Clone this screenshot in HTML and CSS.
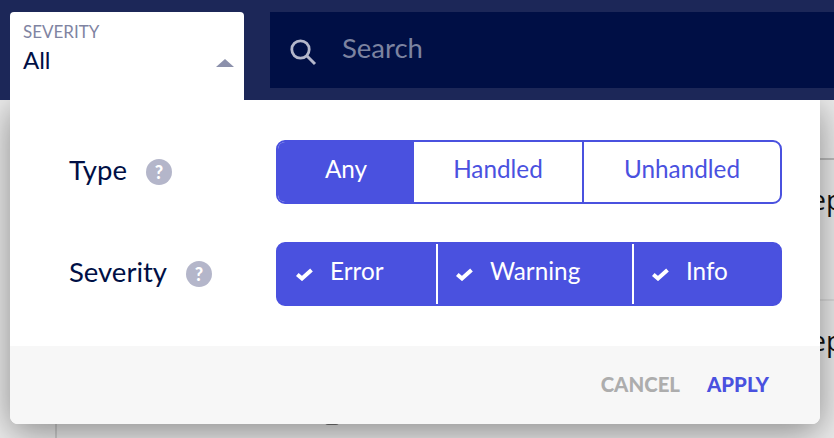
FILE: index.html
```html
<!DOCTYPE html>
<html lang="en">
<head>
<meta charset="utf-8">
<title>Severity filter</title>
<link rel="stylesheet" href="styles.css">
</head>
<body>
<div class="page">
  <header class="topbar">
    <button class="dropdown" type="button">
      <span class="dropdown-label">SEVERITY</span>
      <span class="dropdown-row">
        <span class="dropdown-value">All</span>
        <span class="caret"></span>
      </span>
    </button>
    <div class="search">
      <svg class="search-icon" viewBox="0 0 28 28" aria-hidden="true">
        <circle cx="11.5" cy="11.5" r="8.7" fill="none" stroke="#b4b7cb" stroke-width="2.8"/>
        <path d="M18 18l8 8" fill="none" stroke="#b4b7cb" stroke-width="3"/>
      </svg>
      <span class="search-text">Search</span>
    </div>
  </header>
  <main class="backdrop">
    <div class="back-row back-first"></div>
    <div class="back-row back-second"><span class="back-text">Step</span></div>
    <div class="back-row"><span class="back-text">Step</span></div>
    <span class="back-mark"></span>
  </main>
  <section class="popup">
    <div class="popup-body">
      <div class="field">
        <div class="field-label">Type<span class="help">?</span></div>
        <div class="segments">
          <span class="seg seg-any seg-on">Any</span>
          <span class="seg seg-handled">Handled</span>
          <span class="seg seg-unhandled">Unhandled</span>
        </div>
      </div>
      <div class="field">
        <div class="field-label">Severity<span class="help">?</span></div>
        <div class="segments segments-filled">
          <span class="chk chk-error"><svg class="tick" viewBox="0 0 17 13" aria-hidden="true"><path d="M1.3 6.5l4.7 4 9.5-8.5" fill="none" stroke="#fff" stroke-width="4"/></svg>Error</span>
          <span class="chk chk-warning"><svg class="tick" viewBox="0 0 17 13" aria-hidden="true"><path d="M1.3 6.5l4.7 4 9.5-8.5" fill="none" stroke="#fff" stroke-width="4"/></svg>Warning</span>
          <span class="chk chk-info"><svg class="tick" viewBox="0 0 17 13" aria-hidden="true"><path d="M1.3 6.5l4.7 4 9.5-8.5" fill="none" stroke="#fff" stroke-width="4"/></svg>Info</span>
        </div>
      </div>
    </div>
    <footer class="popup-footer">
      <span class="action action-cancel">CANCEL</span>
      <span class="action action-apply">APPLY</span>
    </footer>
  </section>
</div>
</body>
</html>
```
FILE: styles.css
```css
* { box-sizing: border-box; }
html, body { margin: 0; padding: 0; }
body { font-family: "Lato", "Open Sans", sans-serif; color: #000f45; }
.page { position: relative; width: 834px; height: 438px; overflow: hidden; background: #ececec; }

.topbar { position: relative; z-index: 2; height: 100px; background: #1c2758; padding: 12px 0 0 10px; display: flex; align-items: flex-start; gap: 26px; }
.dropdown { width: 234px; height: 88px; border: 0; background: #fff; border-radius: 4px 4px 0 0; padding: 11px 10px 0 13px; display: flex; flex-direction: column; text-align: left; font: inherit; color: inherit; }
.dropdown-label { font-size: 17px; line-height: 18px; font-weight: 400; color: #7f84a2; }
.dropdown-row { display: flex; justify-content: space-between; align-items: center; width: 100%; padding-top: 4px; }
.dropdown-value { font-size: 24px; line-height: 30px; }
.caret { width: 0; height: 0; border-left: 9px solid transparent; border-right: 9px solid transparent; border-bottom: 8px solid #8b90ab; margin-top: 5px; }
.search { flex: 1; height: 76px; background: #000f45; display: flex; align-items: center; padding-left: 20px; }
.search-icon { width: 28px; height: 28px; margin-top: 3px; margin-left: -1px; }
.search-text { margin-left: 25px; font-size: 27.5px; color: #7c83a0; margin-top: -6px; }

.backdrop { position: relative; margin-left: 55px; height: 338px; border-left: 2px solid #cfcfcf; }
.back-row { height: 141px; border-bottom: 2px solid #dcdcdc; padding: 20px 0 0 728px; white-space: nowrap; }
.back-first { height: 60px; border-bottom-color: #bcbcbc; }
.back-text { font-family: "Open Sans", sans-serif; font-size: 28px; color: #111; }
.back-mark { position: absolute; left: 268px; top: 322px; width: 14px; height: 3px; background: #777; border-radius: 0 0 7px 7px; }

.popup { position: absolute; z-index: 1; left: 10px; top: 100px; width: 810px; height: 324px; background: #fff; border-radius: 0 0 8px 8px; box-shadow: 0 8px 36px rgba(0,0,0,.42); overflow: hidden; display: flex; flex-direction: column; }
.popup-body { flex: 1; padding: 40px 24px 0 59px; display: flex; flex-direction: column; gap: 38px; }
.field { display: flex; align-items: center; }
.field-label { width: 207px; font-size: 27.5px; display: flex; align-items: center; margin-top: -6px; }
.help { width: 26px; height: 26px; border-radius: 50%; background: #b4b6ca; color: #fff; font-size: 18px; font-weight: 900; line-height: 26px; text-align: center; margin-left: 19px; margin-top: 6px; }

.segments { width: 506px; height: 64px; border: 2px solid #4a51df; border-radius: 9px; display: flex; overflow: hidden; color: #4a51df; font-size: 24.3px; }
.seg { display: flex; align-items: center; justify-content: center; padding-bottom: 7px; }
.seg-any { width: 136px; }
.seg-handled { width: 170px; border-right: 2px solid #4a51df; }
.seg-unhandled { flex: 1; }
.seg-on { background: #4a51df; color: #fff; }

.segments-filled { background: #4a51df; color: #fff; }
.chk { display: flex; align-items: center; padding-bottom: 8px; }
.chk-error { width: 158px; padding-left: 18px; }
.chk-warning { width: 196px; padding-left: 18px; border-left: 2px solid #fff; }
.chk-info { flex: 1; padding-left: 18px; border-left: 2px solid #fff; }
.tick { width: 17px; height: 13px; margin: 8px 17px 0 0; flex: none; }

.popup-footer { height: 78px; background: #f7f7f7; display: flex; justify-content: flex-end; align-items: center; gap: 27px; padding: 0 51px 2px 0; font-size: 20.4px; font-weight: 900; }
.action-cancel { color: #adadad; }
.action-apply { color: #4a51df; }
```
